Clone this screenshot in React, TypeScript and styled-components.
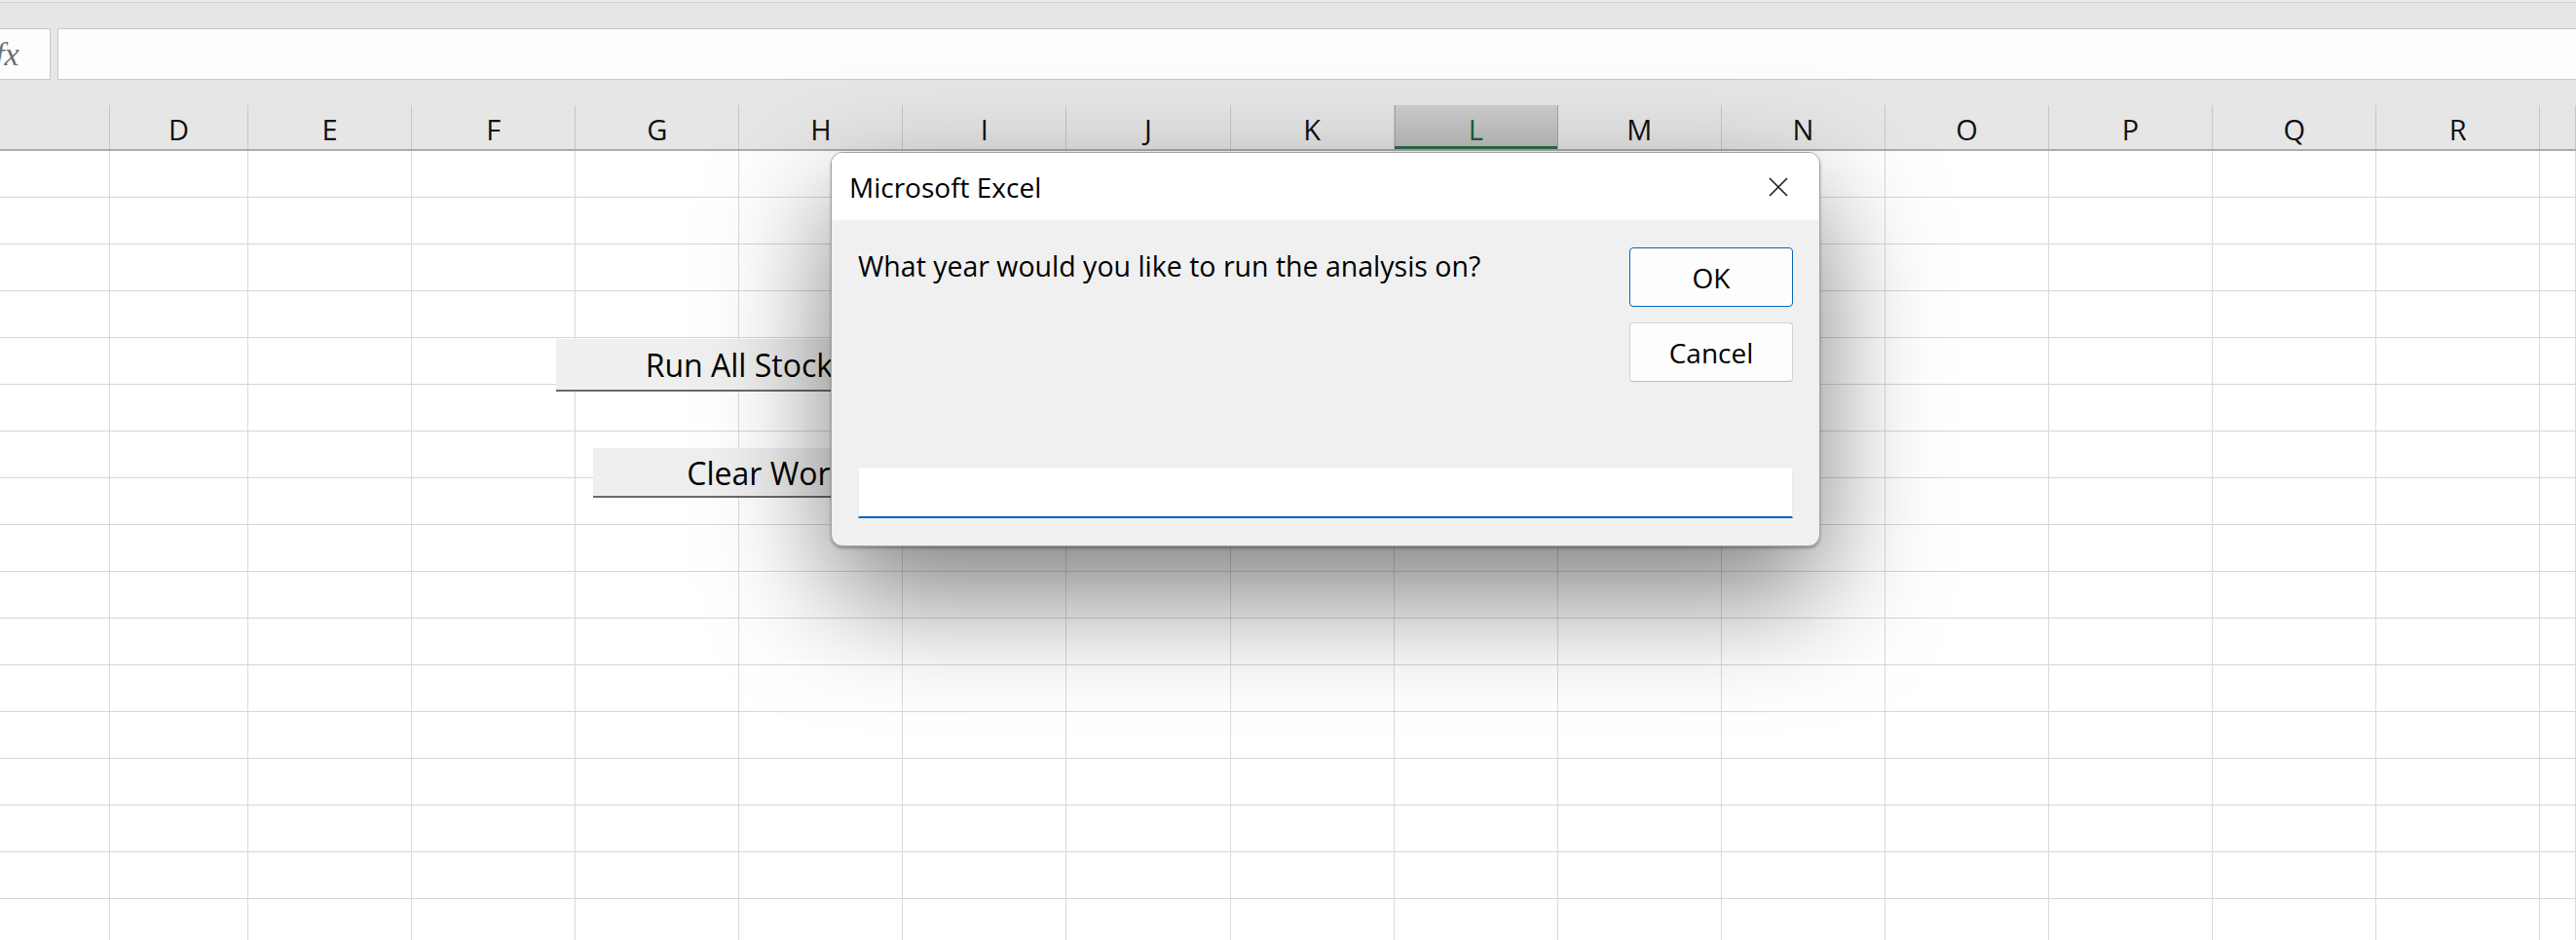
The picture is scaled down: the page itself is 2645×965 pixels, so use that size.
import styled, { createGlobalStyle } from "styled-components";

const COLS = ["", "D", "E", "F", "G", "H", "I", "J", "K", "L", "M", "N", "O", "P", "Q", "R", ""];
const SELECTED = "L";
const ROW_COUNT = 17;
const GRID = "113px 142px repeat(14, 168.1px) 1fr";

const GlobalStyle = createGlobalStyle`
  html, body {
    margin: 0;
    padding: 0;
    background: #ffffff;
    overflow: hidden;
  }
  body {
    font-family: "Open Sans", "Liberation Sans", sans-serif;
    color: #000;
  }
`;

const Window = styled.div`
  position: relative;
  width: 2645px;
  height: 965px;
  display: flex;
  flex-direction: column;
  background: #e6e6e6;
  overflow: hidden;
  border-top: 2px solid #ececec;
  box-sizing: border-box;
`;

const TopRule = styled.div`
  height: 1px;
  flex-shrink: 0;
  background: #d0d0d0;
`;

const FormulaBar = styled.div`
  display: flex;
  flex-shrink: 0;
  height: 53px;
  margin-top: 26px;
  margin-bottom: 26px;
`;

const FxBox = styled.div`
  box-sizing: border-box;
  width: 80px;
  margin-left: -28px;
  display: flex;
  align-items: center;
  padding-left: 22px;
  background: #fdfdfd;
  border: 1px solid #c8c8c8;
  font-family: "Liberation Serif", "DejaVu Serif", serif;
  font-style: italic;
  font-size: 34px;
  color: #6f6f6f;
`;

const FormulaInput = styled.div`
  flex: 1;
  margin-left: 7px;
  margin-right: -10px;
  background: #fdfdfd;
  border: 1px solid #c8c8c8;
`;

const HeaderRow = styled.div`
  display: grid;
  flex-shrink: 0;
  grid-template-columns: ${GRID};
  height: 45px;
  border-bottom: 2px solid #acacac;
`;

const HeaderCell = styled.div<{ $selected?: boolean }>`
  box-sizing: border-box;
  display: flex;
  align-items: center;
  justify-content: center;
  padding-top: 4px;
  border-right: 1px solid ${(p) => (p.$selected ? "#a8a8a8" : "#c6c6c6")};
  background: ${(p) => (p.$selected ? "linear-gradient(#cdcdcd, #bdbdbd)" : "transparent")};
  box-shadow: ${(p) => (p.$selected ? "inset 0 -3px 0 #2f6d4c, inset 1px 0 0 #a8a8a8" : "none")};
  color: ${(p) => (p.$selected ? "#1f5c3d" : "#111")};
  font-size: 29px;
  white-space: nowrap;
`;

const Sheet = styled.div`
  flex: 1;
  min-height: 0;
  overflow: hidden;
  background: #ffffff;
`;

const Row = styled.div`
  display: grid;
  grid-template-columns: ${GRID};
  height: 48px;
`;

const Cell = styled.div`
  box-sizing: border-box;
  border-right: 1px solid #dadada;
  border-bottom: 1px solid #d6d6d6;
`;

const SheetButton = styled.div<{ $left: number; $top: number; $width: number; $height: number }>`
  position: absolute;
  left: ${(p) => p.$left}px;
  top: ${(p) => p.$top}px;
  width: ${(p) => p.$width}px;
  height: ${(p) => p.$height}px;
  box-sizing: border-box;
  display: flex;
  align-items: center;
  justify-content: center;
  padding-top: 1px;
  background: #efefef;
  border-bottom: 2px solid #6a6a6a;
  font-size: 32px;
  color: #000;
  white-space: nowrap;
`;

const Dialog = styled.div`
  position: absolute;
  left: 853px;
  top: 154px;
  width: 1016px;
  height: 405px;
  box-sizing: border-box;
  display: flex;
  flex-direction: column;
  overflow: hidden;
  border: 1px solid #a4a4a4;
  border-radius: 12px;
  background: #f0f0f0;
  box-shadow: 0 2px 3px rgba(0, 0, 0, 0.28), 0 50px 120px rgba(0, 0, 0, 0.5);
`;

const TitleBar = styled.div`
  height: 69px;
  flex-shrink: 0;
  display: flex;
  align-items: center;
  justify-content: space-between;
  padding: 0 32px 0 18px;
  background: #ffffff;
  font-size: 28px;
`;

const CloseIcon = styled.svg`
  width: 20px;
  height: 20px;
  margin-top: 1px;
`;

const Body = styled.div`
  flex: 1;
  display: flex;
  flex-direction: column;
  justify-content: space-between;
  padding: 28px 27px 28px 27px;
`;

const TopLine = styled.div`
  display: flex;
  justify-content: space-between;
  align-items: flex-start;
`;

const Message = styled.div`
  font-size: 28.5px;
  line-height: 38px;
  margin-top: 0;
`;

const ButtonStack = styled.div`
  display: flex;
  flex-direction: column;
  gap: 16px;
`;

const DialogButton = styled.div<{ $primary?: boolean }>`
  box-sizing: border-box;
  width: 168px;
  height: 61px;
  display: flex;
  align-items: center;
  justify-content: center;
  background: #fdfdfd;
  border: 1px solid ${(p) => (p.$primary ? "#0067c0" : "#d3d3d3")};
  border-bottom-color: ${(p) => (p.$primary ? "#0067c0" : "#bdbdbd")};
  border-radius: 4px;
  font-size: 28px;
`;

const TextBox = styled.div`
  box-sizing: border-box;
  height: 53px;
  background: #ffffff;
  border: 1px solid #ececec;
  border-bottom: 2px solid #0067c0;
  border-radius: 4px 4px 0 0;
`;

export default function App() {
  return (
    <>
      <GlobalStyle />
      <Window>
        <TopRule />
        <FormulaBar>
          <FxBox>fx</FxBox>
          <FormulaInput />
        </FormulaBar>

        <HeaderRow>
          {COLS.map((c, i) => (
            <HeaderCell key={i} $selected={c === SELECTED}>
              {c}
            </HeaderCell>
          ))}
        </HeaderRow>

        <Sheet>
          {Array.from({ length: ROW_COUNT }).map((_, r) => (
            <Row key={r}>
              {COLS.map((_, c) => (
                <Cell key={c} />
              ))}
            </Row>
          ))}
        </Sheet>

        <SheetButton $left={571} $top={346} $width={391} $height={54}>
          Run All Stocks
        </SheetButton>
        <SheetButton $left={609} $top={458} $width={439} $height={51}>
          Clear Worksheet
        </SheetButton>

        <Dialog>
          <TitleBar>
            <span>Microsoft Excel</span>
            <CloseIcon viewBox="0 0 20 20">
              <path d="M1 1 L19 19 M19 1 L1 19" stroke="#1a1a1a" strokeWidth="1.6" fill="none" />
            </CloseIcon>
          </TitleBar>
          <Body>
            <TopLine>
              <Message>What year would you like to run the analysis on?</Message>
              <ButtonStack>
                <DialogButton $primary>OK</DialogButton>
                <DialogButton>Cancel</DialogButton>
              </ButtonStack>
            </TopLine>
            <TextBox />
          </Body>
        </Dialog>
      </Window>
    </>
  );
}
